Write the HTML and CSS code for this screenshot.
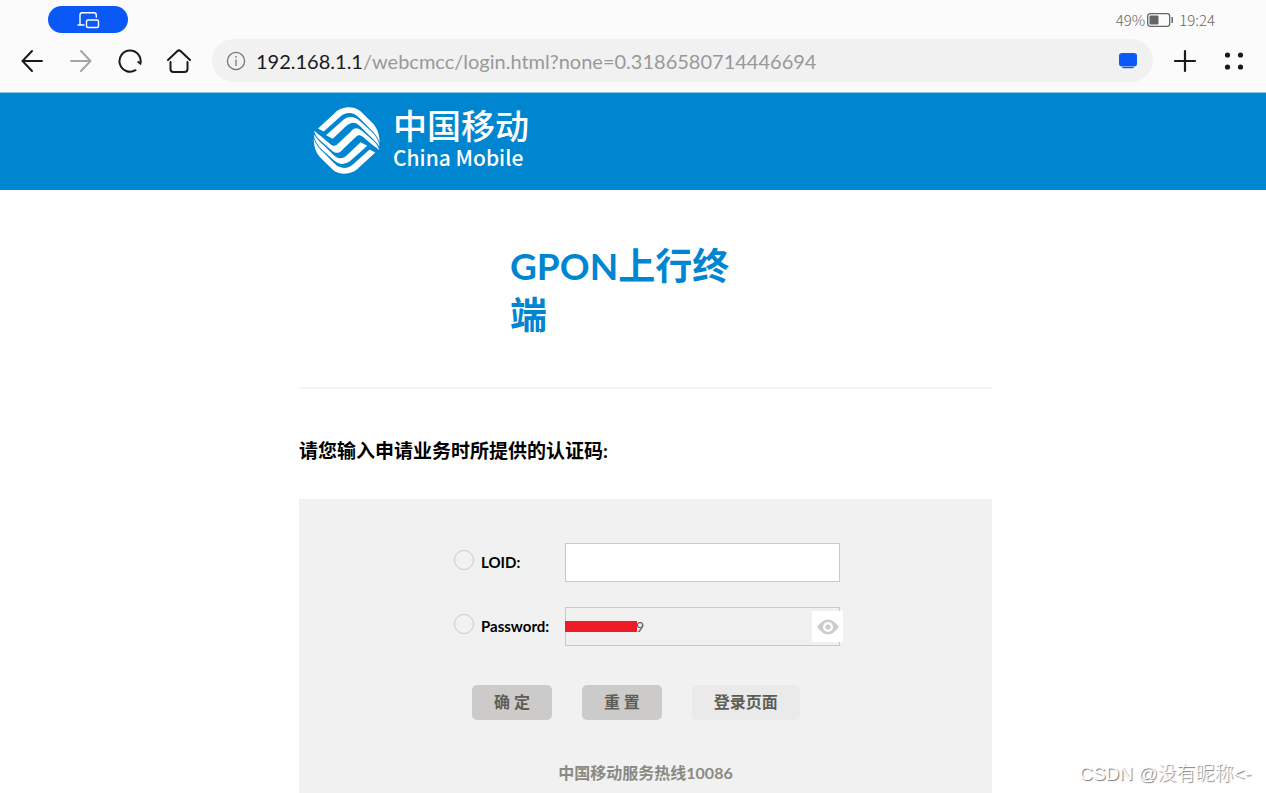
FILE: index.html
```
<!DOCTYPE html>
<html lang="zh-CN">
<head>
    <meta charset="UTF-8">
    <meta name="viewport" content="width=device-width, initial-scale=1.0">
    <title>中国移动</title>
    <link rel="stylesheet" href="styles.css">
</head>
<body>
    <div class="browser">
        <div class="status">
            <button class="cast" aria-label="multi-screen">
                <svg width="24" height="20" viewBox="0 0 24 20" fill="none" stroke="#fff" stroke-width="1.4" stroke-linecap="round">
                    <path d="M2 15h6M4 15V5q0-2.300 2.300-2.300H18q2.300 0 2.300 2.300v2"/>
                    <rect x="10.500" y="10" width="12" height="7.500" rx="1.500"/>
                </svg>
            </button>
            <div class="battery">
                <span>49%</span>
                <svg width="26" height="14" viewBox="0 0 26 14">
                    <rect x="0.700" y="0.700" width="22" height="12.600" rx="2.500" fill="none" stroke="#666" stroke-width="1.300"/>
                    <rect x="2.500" y="2.500" width="9" height="9" rx="1" fill="#666"/>
                    <path d="M25.200 4v6" stroke="#666" stroke-width="1.500"/>
                </svg>
                <span class="time">19:24</span>
            </div>
        </div>
        <div class="toolbar">
            <button aria-label="back">
                <svg width="24" height="24" viewBox="0 0 24 24" fill="none" stroke="#1a1a1a" stroke-width="2" stroke-linecap="round"><path d="M2.500 12H22M12 2L2.500 12L12 22"/></svg>
            </button>
            <button aria-label="forward">
                <svg width="24" height="24" viewBox="0 0 24 24" fill="none" stroke="#a5a5a5" stroke-width="2" stroke-linecap="round"><path d="M2 12H21.500M12 2L21.500 12L12 22"/></svg>
            </button>
            <button aria-label="refresh">
                <svg width="24" height="24" viewBox="0 0 24 24" fill="none" stroke="#1a1a1a" stroke-width="2" stroke-linecap="round"><path d="M17.500 21.200A10.600 10.600 0 1 1 22.400 14.500L20.300 13"/></svg>
            </button>
            <button aria-label="home">
                <svg width="24" height="24" viewBox="0 0 24 24" fill="none" stroke="#1a1a1a" stroke-width="2" stroke-linecap="round" stroke-linejoin="round"><path d="M1 11L10.200 2.200Q12 .6 13.800 2.200L23 11M3.500 13v7q0 3 3 3h11q3 0 3-3v-7"/></svg>
            </button>
            <div class="address">
                <svg width="20" height="20" viewBox="0 0 20 20" fill="none" stroke="#777" stroke-width="1.300"><circle cx="10" cy="10" r="8.600"/><path d="M10 8.500V15M10 5v1.700"/></svg>
                <p class="url"><b>192.168.1.1</b>/webcmcc/login.html?none=0.3186580714446694</p>
                <svg width="20" height="18" viewBox="0 0 20 18" fill="#0a59f7"><rect x="1" y="1" width="18" height="13.500" rx="3"/><path d="M4.500 15h11v1.200h-11z"/></svg>
            </div>
            <button aria-label="new tab">
                <svg width="24" height="24" viewBox="0 0 24 24" stroke="#1a1a1a" stroke-width="2.200" stroke-linecap="round"><path d="M2 12h20M12 2v20"/></svg>
            </button>
            <button aria-label="menu">
                <svg width="24" height="24" viewBox="0 0 24 24" fill="#1a1a1a"><circle cx="5.500" cy="6" r="2.600"/><circle cx="18.500" cy="6" r="2.600"/><circle cx="5.500" cy="18" r="2.600"/><circle cx="18.500" cy="18" r="2.600"/></svg>
            </button>
        </div>
    </div>

    <header class="banner">
        <div class="logo">
            <svg width="67" height="67" viewBox="27 29 200 200" fill="#fff">
                <path id="outer" d="M42 93L90 49C110 26 148 24 168 41L204 76C219 91 226 112 226 136C220 118 210 106 198 95L164 60C146 42 124 44 108 58L59 102Z"/>
                <path id="inner" d="M66 113L112 72C130 54 150 56 166 70L200 101C214 114 223 128 226 148C216 134 206 124 196 115L166 85C152 71 138 75 126 86L86 124Z"/>
                <path d="M98 142L138 104C150 89 160 89 174 101L206 129C216 138 222 146 225 158C214 149 206 143 196 135L176 118C168 112 162 112 157 116L117 154C105 169 95 169 81 157L49 129C39 120 33 112 30 100C41 109 49 115 59 123L79 140C87 146 93 146 98 142Z"/>
                <use href="#outer" transform="rotate(180 127.500 129)"/>
                <use href="#inner" transform="rotate(180 127.500 129)"/>
            </svg>
            <div class="brand">
                <div class="brand-cn">中国移动</div>
                <div class="brand-en">China Mobile</div>
            </div>
        </div>
    </header>

    <main class="page">
        <div class="title">
            <h1>GPON上行终端</h1>
        </div>
        <h2>请您输入申请业务时所提供的认证码:</h2>
        <form class="panel">
            <div class="row">
                <input type="radio" name="mode" id="modeLoid">
                <label for="modeLoid">LOID:</label>
                <input type="text" class="text" id="loid" aria-label="LOID">
            </div>
            <div class="row">
                <input type="radio" name="mode" id="modePassword">
                <label for="modePassword">Password:</label>
                <div class="secret">
                    <input type="text" class="text" id="password" aria-label="Password" value="9">
                    <span class="mask"></span>
                    <button type="button" class="eye" aria-label="show password">
                        <svg width="22" height="16" viewBox="0 0 22 16"><path d="M0 8Q11-7 22 8Q11 23 0 8Z" fill="#ccc"/><circle cx="11" cy="8" r="5" fill="#fff"/><circle cx="11" cy="8" r="2.600" fill="#ccc"/></svg>
                    </button>
                </div>
            </div>
            <div class="buttons">
                <button type="submit">确 定</button>
                <button type="reset">重 置</button>
                <button type="button" class="light">登录页面</button>
            </div>
            <p class="hotline">中国移动服务热线10086</p>
        </form>
    </main>

    <div class="watermark">CSDN @没有昵称&lt;-</div>
</body>
</html>
```

FILE: styles.css
```
* {
    box-sizing: border-box;
}
body {
    margin: 0;
    height: 100vh;
    overflow: hidden;
    position: relative;
    background: #fff;
    font-family: Lato, "Noto Sans CJK SC", sans-serif;
    font-size: 16px;
}
h1, h2, p {
    margin: 0;
}
button {
    border: 0;
    padding: 0;
    background: none;
    font-family: inherit;
    cursor: pointer;
}
svg {
    display: block;
    flex: none;
}

/* browser chrome */
.browser {
    height: 93px;
    background: #fbfbfb;
    border-bottom: 1px solid #8cc8e8;
}
.status {
    display: flex;
    justify-content: space-between;
    align-items: center;
    padding: 6px 51px 0 48px;
}
.cast {
    width: 80px;
    height: 27px;
    border-radius: 14px;
    background: #0a59f7;
    display: flex;
    align-items: center;
    justify-content: center;
}
.battery {
    display: flex;
    align-items: center;
    gap: 2px;
    color: #666;
    font-family: "Noto Sans CJK SC", sans-serif;
    font-weight: 300;
    font-size: 15px;
    line-height: 20px;
}
.time {
    margin-left: 4px;
}
.toolbar {
    display: flex;
    align-items: center;
    gap: 25px;
    padding: 6px 20px;
}
.address {
    flex: 1;
    display: flex;
    align-items: center;
    height: 43px;
    margin: 0 -5px 0 -4px;
    padding: 0 15px 0 14px;
    border-radius: 22px;
    background: #f1f1f1;
}
.url {
    flex: 1;
    margin-left: 10px;
    color: #999;
    font-size: 20px;
    line-height: 24px;
    white-space: nowrap;
}
.url b {
    color: #1a1a1a;
    font-weight: 400;
}

/* China Mobile header */
.banner {
    height: 97px;
    padding-left: 25px;
    background: #0085d0;
    color: #fff;
}
.logo {
    display: flex;
    align-items: center;
    gap: 13px;
    max-width: 693px;
    height: 97px;
    margin: 0 auto;
    padding: 0 0 2px 14px;
}
.brand {
    padding-bottom: 4px;
}
.brand-cn {
    font-size: 34px;
    font-weight: 500;
    line-height: 36px;
}
.brand-en {
    font-family: "Noto Sans CJK SC", sans-serif;
    font-size: 21px;
    font-weight: 500;
    line-height: 26px;
}

.page {
    padding-left: 25px;
}
.title, h2, .panel {
    max-width: 693px;
    margin: 0 auto;
}
.title {
    padding: 51px 0 48px 211px;
    border-bottom: 2px solid #f5f5f5;
}
h1 {
    max-width: 240px;
    color: #0085d0;
    font-size: 37px;
    line-height: 49px;
}
h2 {
    padding: 48px 0 34px;
    font-size: 19px;
    line-height: 28px;
}
.panel {
    padding: 44px 0 20px;
    background: #f1f1f1;
}
.row {
    display: flex;
    align-items: center;
    height: 39px;
    margin: 0 0 25px 155px;
}
.row input[type="radio"] {
    appearance: none;
    width: 20px;
    height: 20px;
    margin: 0 7px 6px 0;
    border: 1px solid #c8c8c8;
    border-radius: 50%;
}
.row label {
    width: 84px;
    font-size: 15px;
    line-height: 18px;
    padding-bottom: 1px;
    font-weight: bold;
}
.text {
    display: block;
    width: 275px;
    height: 39px;
    padding: 0 8px;
    border: 1px solid #c8c8c8;
    background: #fff;
    color: #555;
    font-family: inherit;
    font-size: 14px;
}
.secret {
    position: relative;
}
.secret .text {
    padding-left: 70px;
    background: #f0f0f0;
}
.mask {
    position: absolute;
    top: 14px;
    left: 0;
    width: 72px;
    height: 11px;
    background: #ee1c24;
}
.eye {
    position: absolute;
    top: 4px;
    right: -3px;
    width: 31px;
    height: 31px;
    background: #fff;
    display: flex;
    align-items: center;
    justify-content: center;
}
.buttons {
    display: flex;
    gap: 30px;
    margin: 39px 0 0 173px;
}
.buttons button {
    height: 35px;
    padding: 0 22px 3px;
    border-radius: 5px;
    background: #cccbc9;
    color: #5e5e56;
    font-size: 16px;
    font-weight: bold;
}
.buttons .light {
    background: #eaeaea;
}
.hotline {
    margin-top: 41px;
    text-align: center;
    color: #8a8a82;
    font-weight: bold;
    line-height: 24px;
}
.watermark {
    position: absolute;
    right: 15px;
    bottom: 6px;
    color: #fff;
    font-family: "Liberation Sans", "Noto Sans CJK SC", sans-serif;
    font-weight: 300;
    font-size: 19px;
    line-height: 26px;
    text-shadow: 1px 1px 1px #777;
}
```
